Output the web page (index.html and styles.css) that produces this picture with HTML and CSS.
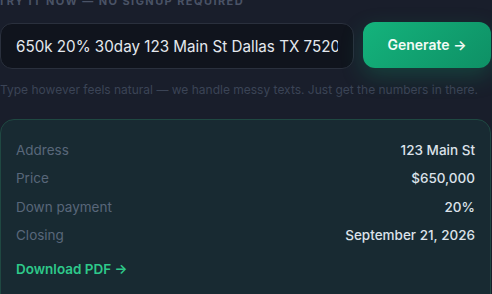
FILE: index.html
```html
<!DOCTYPE html>
<html lang="en">
  <head>
    <meta charset="UTF-8" />
    <meta name="viewport" content="width=device-width, initial-scale=1.0" />
    <title>Try it now</title>
    <link rel="stylesheet" href="styles.css">
  </head>
  <body>
    <div class="demo">
      <div class="eyebrow">Try it now — no signup required</div>

      <div class="composer">
        <input class="prompt" type="text" value="650k 20% 30day 123 Main St Dallas TX 75201" />
        <button class="generate">Generate →</button>
      </div>
      <p class="hint">Type however feels natural — we handle messy texts. Just get the numbers in there.</p>

      <div class="result">
        <div class="row">
          <span class="label">Address</span>
          <span class="value">123 Main St</span>
        </div>
        <div class="row">
          <span class="label">Price</span>
          <span class="value">$650,000</span>
        </div>
        <div class="row">
          <span class="label">Down payment</span>
          <span class="value">20%</span>
        </div>
        <div class="row">
          <span class="label">Closing</span>
          <span class="value">September 21, 2026</span>
        </div>
        <a class="download" href="#">Download PDF →</a>
      </div>
    </div>
  </body>
</html>
```

FILE: styles.css
```css
* {
  box-sizing: border-box;
}
body {
  margin: 0;
  background: #191e2b;
  font-family: Inter, "Noto Sans", sans-serif;
  overflow: hidden;
}
.demo {
  width: 491px;
  margin-top: -6px;
}
.eyebrow {
  font-size: 11px;
  font-weight: 700;
  letter-spacing: 0.13em;
  text-transform: uppercase;
  color: #4a5366;
  line-height: 14px;
  margin-left: -2px;
}
.composer {
  display: flex;
  align-items: center;
  gap: 9px;
  margin-top: 12px;
}
.prompt {
  flex: 1;
  min-width: 0;
  height: 46px;
  margin-top: 3px;
  padding: 0 15px;
  background: #10141d;
  border: 1px solid #2a303d;
  border-radius: 12px;
  color: #e4e8ee;
  font-family: inherit;
  font-size: 15.2px;
  outline: none;
}
.generate {
  width: 128px;
  height: 46px;
  border: none;
  border-radius: 12px;
  background: linear-gradient(135deg, #14b37c, #0e9065);
  color: #f2fbf6;
  font-family: inherit;
  font-size: 14px;
  font-weight: 600;
  cursor: pointer;
  box-shadow: 0 8px 22px rgba(16, 170, 115, 0.25);
}
.hint {
  margin: 12px 0 0;
  font-size: 12px;
  line-height: 18px;
  color: #3b4456;
}
.result {
  margin-top: 20px;
  padding: 20px 15px 30px;
  background: #182a32;
  border: 1px solid #1f4842;
  border-radius: 14px;
  display: flex;
  flex-direction: column;
  gap: 8.3px;
}
.row {
  display: flex;
  justify-content: space-between;
  font-size: 13.5px;
  line-height: 20px;
}
.label {
  color: #58677a;
}
.value {
  color: #dce2ea;
  font-weight: 500;
}
.download {
  margin-top: 6px;
  font-size: 13.5px;
  line-height: 20px;
  font-weight: 600;
  color: #2ec98a;
  text-decoration: none;
}
```
